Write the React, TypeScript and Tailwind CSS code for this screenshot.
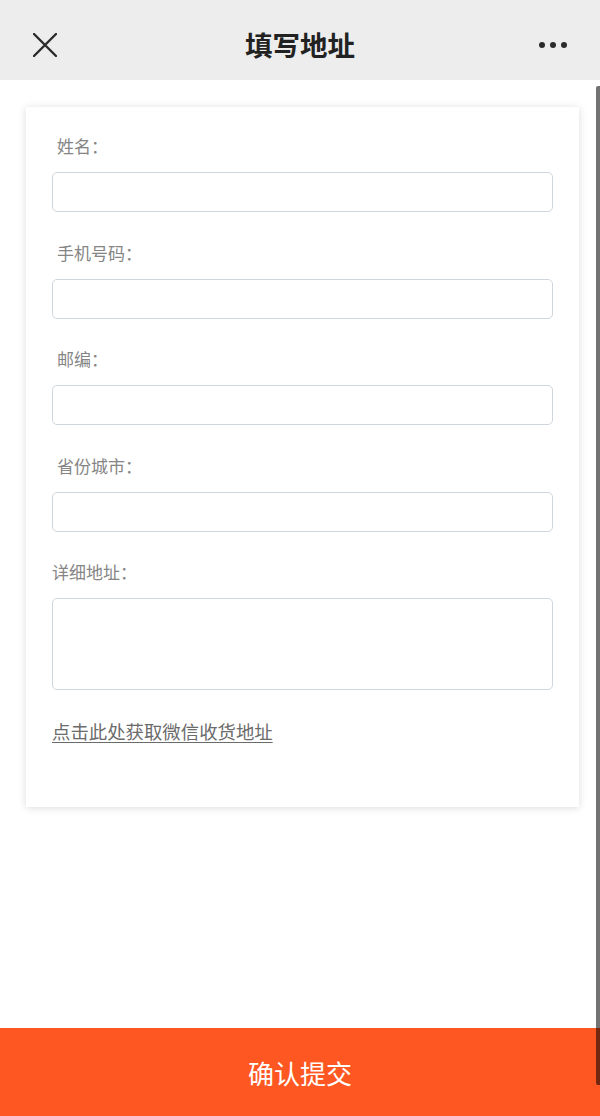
import React from "react";

const font = { fontFamily: '"Noto Sans CJK SC", "Noto Sans", sans-serif' };

function Field({ label, indent = true, tall = false }: { label: string; indent?: boolean; tall?: boolean }) {
  return (
    <div className="flex flex-col">
      <div className={`h-[24px] leading-[24px] text-[17px] text-[#858585] ${indent ? "pl-[5px]" : ""}`}>{label}</div>
      {tall ? (
        <textarea className="mt-[14px] h-[92px] w-full resize-none rounded-[5px] border border-[#d0d6de] bg-white outline-none" />
      ) : (
        <input className="mt-[14px] h-[40px] w-full rounded-[5px] border border-[#d0d6de] bg-white outline-none" />
      )}
    </div>
  );
}

export default function App() {
  return (
    <div className="relative flex h-[1116px] w-[600px] flex-col overflow-hidden bg-white" style={font}>
      <header className="flex h-[80px] shrink-0 items-center justify-between bg-[#ededed] px-[33px] pt-[10px]">
        <svg width="24" height="24" viewBox="0 0 24 24" className="text-[#2b2b2b]">
          <path d="M1 1 L23 23 M23 1 L1 23" stroke="currentColor" strokeWidth="2.4" strokeLinecap="round" />
        </svg>
        <h1 className="pl-[4px] text-[27.5px] font-bold leading-none text-[#222222]">填写地址</h1>
        <div className="flex w-[28px] items-center justify-between">
          <span className="h-[6px] w-[6px] rounded-full bg-[#2b2b2b]" />
          <span className="h-[6px] w-[6px] rounded-full bg-[#2b2b2b]" />
          <span className="h-[6px] w-[6px] rounded-full bg-[#2b2b2b]" />
        </div>
      </header>

      <main className="flex-1 px-[26px] pt-[27px] pr-[21px]">
        <div className="flex flex-col gap-[28.5px] bg-white px-[26px] pt-[27px] pb-[64px] shadow-[0_1px_8px_rgba(0,0,0,0.14)]">
          <Field label="姓名：" />
          <Field label="手机号码：" />
          <Field label="邮编：" />
          <Field label="省份城市：" />
          <Field label="详细地址：" indent={false} tall />
          <a className="h-[24px] leading-[24px] text-[18.4px] text-[#6b6b6b] underline underline-offset-[3px]">点击此处获取微信收货地址</a>
        </div>
      </main>

      <button className="flex h-[88px] w-full shrink-0 items-center justify-center bg-[#ff5722] text-[26px] text-white">
        确认提交
      </button>

      <div className="absolute right-0 top-[86px] h-[999px] w-[4px] rounded-l-[2px] bg-[rgba(0,0,0,0.55)]" />
    </div>
  );
}
